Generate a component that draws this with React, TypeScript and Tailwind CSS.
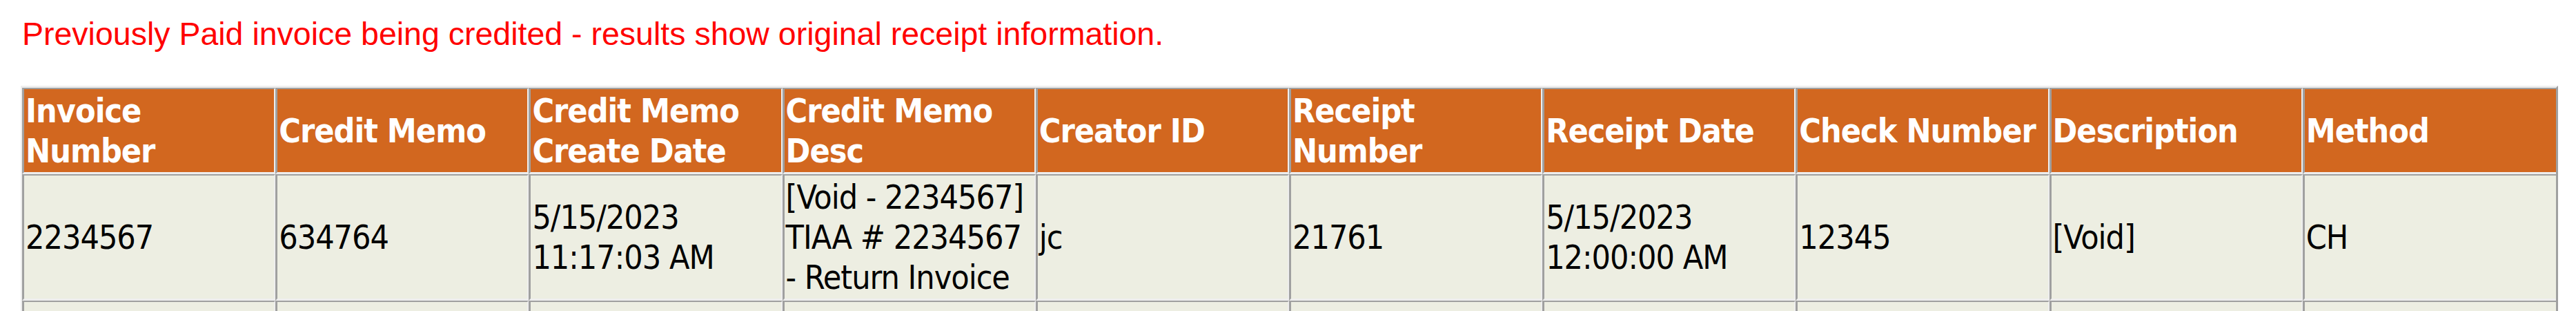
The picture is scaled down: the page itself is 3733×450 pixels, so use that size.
const headers: string[][] = [
  ['Invoice', 'Number'],
  ['Credit Memo'],
  ['Credit Memo', 'Create Date'],
  ['Credit Memo', 'Desc'],
  ['Creator ID'],
  ['Receipt', 'Number'],
  ['Receipt Date'],
  ['Check Number'],
  ['Description'],
  ['Method'],
];

const rows: string[][][] = [
  [
    ['2234567'],
    ['634764'],
    ['5/15/2023', '11:17:03 AM'],
    ['[Void - 2234567]', 'TIAA # 2234567', '- Return Invoice'],
    ['jc'],
    ['21761'],
    ['5/15/2023', '12:00:00 AM'],
    ['12345'],
    ['[Void]'],
    ['CH'],
  ],
  [[''], [''], [''], [''], [''], [''], [''], [''], [''], ['']],
];

const cell =
  'border-t-2 border-l-[3px] border-r-2 border-b-[3px] border-t-[#a0a0a0] border-l-[#a0a0a0] border-r-[#eeeeee] border-b-[#eeeeee] last:border-r-0 p-0.5 text-left align-middle';

function Lines({ lines }: { lines: string[] }) {
  return (
    <>
      {lines.map((l, i) => (
        <span key={i} className="block whitespace-nowrap">
          {l === '' ? '\u00a0' : l}
        </span>
      ))}
    </>
  );
}

export default function App() {
  return (
    <div className="min-h-screen bg-white pt-[23px]">
      <p className="ml-[32px] text-[46.5px] leading-[53px] text-[#ff0000] font-['Liberation_Sans',Arial,sans-serif]">
        Previously Paid invoice being credited - results show original receipt information.
      </p>

      <table className="mt-[48px] ml-[30px] w-[3677px] table-fixed border-separate border-spacing-0 border-t-[3px] border-l-2 border-r-[3px] border-t-[#eeeeee] border-l-[#eeeeee] border-r-[#a0a0a0] bg-[#eeeeee] text-[48px] leading-[58px] tracking-[-1px] font-['DejaVu_Sans_Condensed','DejaVu_Sans',sans-serif]">
        <thead>
          <tr>
            {headers.map((h, i) => (
              <th key={i} className={`${cell} bg-[#d2671f] font-bold text-white`}>
                <Lines lines={h} />
              </th>
            ))}
          </tr>
        </thead>
        <tbody>
          {rows.map((r, ri) => (
            <tr key={ri}>
              {r.map((c, ci) => (
                <td key={ci} className={`${cell} bg-[#edeee2] text-black`}>
                  <Lines lines={c} />
                </td>
              ))}
            </tr>
          ))}
        </tbody>
      </table>
    </div>
  );
}
